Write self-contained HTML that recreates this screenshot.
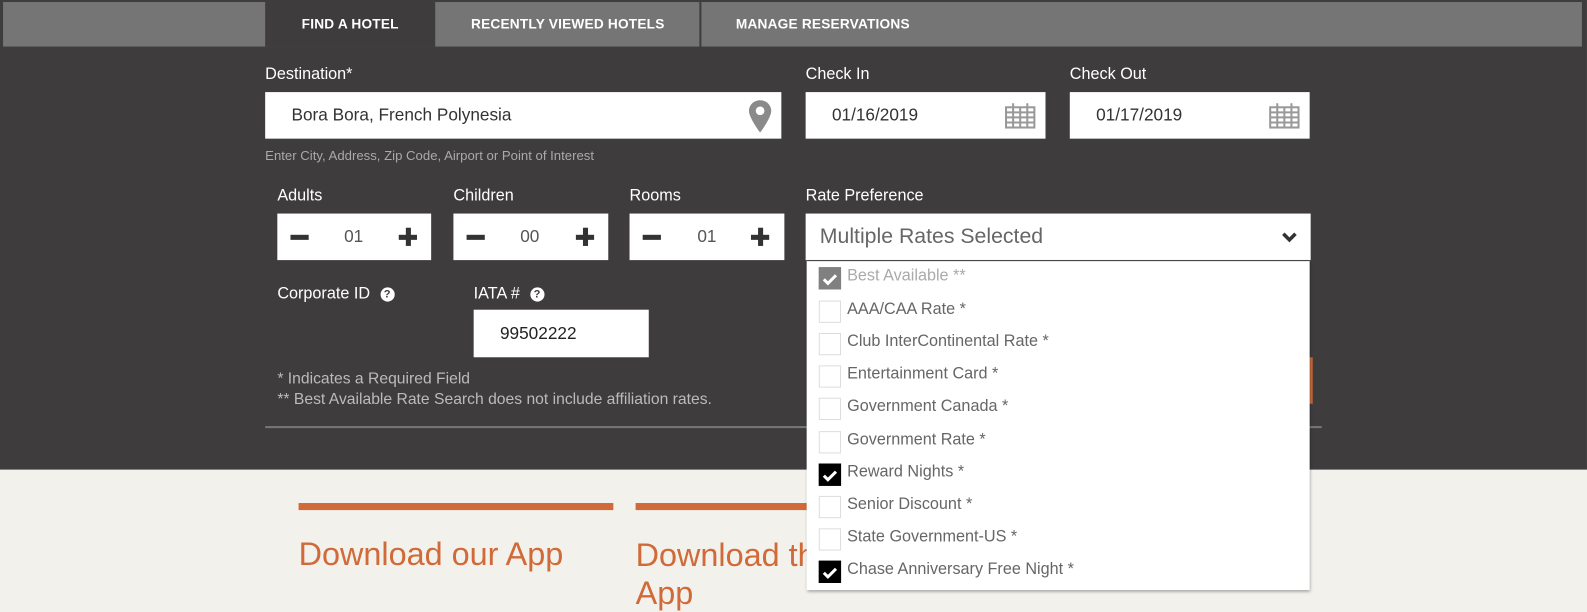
<!DOCTYPE html>
<html><head><meta charset="utf-8"><style>
*{margin:0;padding:0;box-sizing:border-box}
body{width:1587px;height:597px;overflow:hidden;background:#f2f1ec;font-family:"Liberation Sans",sans-serif;position:relative}
#w{position:absolute;left:0;top:0;width:1568px;height:590px;transform:scale(1.0121);transform-origin:0 0}
.a{position:absolute}
.dark{left:0;top:0;width:1568px;height:464px;background:#3e3c3d}
.tabbar{left:3px;top:2px;width:1560px;height:44px;background:#757575}
.tab{top:2px;height:44px;color:#fff;font-weight:bold;font-size:13.5px;line-height:44px;text-align:center;letter-spacing:.2px}
.lbl{color:#fff;font-size:16px}
.box{background:#fff}
.val{color:#333;font-size:17px}
.q{display:inline-block;width:14px;height:14px;border-radius:50%;background:#fff;color:#3e3c3d;font-size:11px;font-weight:bold;text-align:center;line-height:14px;vertical-align:1px;margin-left:10px}
.item{left:809px;height:32px;width:480px}
.cb{position:absolute;left:0;top:6px;width:22px;height:22px;border:1px solid #ddd;background:#fff}
.cb.on{background:#000;border-color:#000}
.cb.dis{background:#808080;border-color:#808080}
.it{position:absolute;left:28px;top:6px;font-size:16px;color:#666}
</style></head><body><div id="w">
<div class="a dark"></div>
<div class="a tabbar"></div>
<div class="a tab" style="left:262px;width:168px;background:#3e3c3d">FIND A HOTEL</div>
<div class="a tab" style="left:431px;width:260px">RECENTLY VIEWED HOTELS</div>
<div class="a" style="left:691px;top:2px;width:2px;height:44px;background:#3e3c3d"></div>
<div class="a tab" style="left:693px;width:240px">MANAGE RESERVATIONS</div>

<div class="a lbl" style="left:262px;top:65px">Destination*</div>
<div class="a box" style="left:262px;top:91px;width:510px;height:46px"></div>
<div class="a val" style="left:288px;top:104px">Bora Bora, French Polynesia</div>
<svg class="a" style="left:739px;top:98px" width="24" height="34" viewBox="0 0 24 34"><path d="M12 1C5.9 1 1 5.6 1 11.6c0 7 11 21.4 11 21.4s11-14.4 11-21.4C23 5.6 18.1 1 12 1z" fill="#8a8a8a"/><circle cx="12" cy="11.5" r="4.3" fill="#fff"/></svg>
<div class="a" style="left:262px;top:146px;color:#aaa;font-size:13px">Enter City, Address, Zip Code, Airport or Point of Interest</div>

<div class="a lbl" style="left:796px;top:65px">Check In</div>
<div class="a box" style="left:796px;top:91px;width:237px;height:46px"></div>
<div class="a val" style="left:822px;top:104px">01/16/2019</div>
<div class="a lbl" style="left:1057px;top:65px">Check Out</div>
<div class="a box" style="left:1057px;top:91px;width:237px;height:46px"></div>
<div class="a val" style="left:1083px;top:104px">01/17/2019</div>
<svg class="a" style="left:992px;top:100px" width="32" height="28" viewBox="0 0 32 28"><g fill="none" stroke="#999" stroke-width="2"><rect x="2" y="6" width="28" height="20"/><path d="M2 11h28M2 16h28M2 21h28M9 6v20M16 6v20M23 6v20M9 2v6M23 2v6"/></g></svg>
<svg class="a" style="left:1253px;top:100px" width="32" height="28" viewBox="0 0 32 28"><g fill="none" stroke="#999" stroke-width="2"><rect x="2" y="6" width="28" height="20"/><path d="M2 11h28M2 16h28M2 21h28M9 6v20M16 6v20M23 6v20M9 2v6M23 2v6"/></g></svg>

<div class="a lbl" style="left:274px;top:185px">Adults</div>
<div class="a lbl" style="left:448px;top:185px">Children</div>
<div class="a lbl" style="left:622px;top:185px">Rooms</div>
<div class="a box" style="left:274px;top:211px;width:152px;height:46px"></div>
<div class="a box" style="left:448px;top:211px;width:153px;height:46px"></div>
<div class="a box" style="left:622px;top:211px;width:153px;height:46px"></div>
<div class="a" style="left:287px;top:232px;width:18px;height:5px;background:#333"></div>
<div class="a" style="left:461px;top:232px;width:18px;height:5px;background:#333"></div>
<div class="a" style="left:635px;top:232px;width:18px;height:5px;background:#333"></div>
<div class="a" style="left:394px;top:232px;width:18px;height:5px;background:#333"></div><div class="a" style="left:400.5px;top:225px;width:5px;height:18px;background:#333"></div>
<div class="a" style="left:569px;top:232px;width:18px;height:5px;background:#333"></div><div class="a" style="left:575.5px;top:225px;width:5px;height:18px;background:#333"></div>
<div class="a" style="left:742px;top:232px;width:18px;height:5px;background:#333"></div><div class="a" style="left:748.5px;top:225px;width:5px;height:18px;background:#333"></div>
<div class="a val" style="left:340px;top:224px;color:#555">01</div>
<div class="a val" style="left:514px;top:224px;color:#555">00</div>
<div class="a val" style="left:689px;top:224px;color:#555">01</div>

<div class="a lbl" style="left:796px;top:185px">Rate Preference</div>
<div class="a box" style="left:796px;top:211px;width:499px;height:46px"></div>
<div class="a" style="left:810px;top:222px;font-size:21px;color:#666">Multiple Rates Selected</div>
<svg class="a" style="left:1266px;top:229px" width="16" height="12" viewBox="0 0 16 12"><path d="M2 2l6 6 6-6" fill="none" stroke="#333" stroke-width="3.5"/></svg>

<div class="a lbl" style="left:274px;top:282px">Corporate ID<span class="q">?</span></div>
<div class="a lbl" style="left:468px;top:282px">IATA #<span class="q">?</span></div>
<div class="a box" style="left:468px;top:306px;width:173px;height:47px"></div>
<div class="a" style="left:494px;top:320px;font-size:17px;color:#222">99502222</div>
<div class="a" style="left:274px;top:365px;font-size:15.5px;color:#bbb;line-height:20px">* Indicates a Required Field<br>** Best Available Rate Search does not include affiliation rates.</div>
<div class="a" style="left:1290px;top:353px;width:7px;height:46px;background:#c8683a"></div>
<div class="a" style="left:262px;top:421px;width:1044px;height:2px;background:#777"></div>

<div class="a" style="left:295px;top:497px;width:311px;height:7px;background:#d06a38"></div>
<div class="a" style="left:628px;top:497px;width:200px;height:7px;background:#d06a38"></div>
<div class="a" style="left:295px;top:529px;font-size:32px;color:#d06a38">Download our App</div>
<div class="a" style="left:628px;top:529px;font-size:32px;color:#d06a38;line-height:38px">Download the<br>App</div>

<div class="a" style="left:797px;top:257px;width:497px;height:326px;background:#fff;border-top:1px solid #333;box-shadow:1px 2px 3px rgba(0,0,0,.35)"></div>
<div class="a item" style="top:258px"><div class="cb dis"></div><div class="it" style="color:#aaa">Best Available **</div></div>
<div class="a item" style="top:291px"><div class="cb"></div><div class="it">AAA/CAA Rate *</div></div>
<div class="a item" style="top:323px"><div class="cb"></div><div class="it">Club InterContinental Rate *</div></div>
<div class="a item" style="top:355px"><div class="cb"></div><div class="it">Entertainment Card *</div></div>
<div class="a item" style="top:387px"><div class="cb"></div><div class="it">Government Canada *</div></div>
<div class="a item" style="top:420px"><div class="cb"></div><div class="it">Government Rate *</div></div>
<div class="a item" style="top:452px"><div class="cb on"></div><div class="it">Reward Nights *</div></div>
<div class="a item" style="top:484px"><div class="cb"></div><div class="it">Senior Discount *</div></div>
<div class="a item" style="top:516px"><div class="cb"></div><div class="it">State Government-US *</div></div>
<div class="a item" style="top:548px"><div class="cb on"></div><div class="it">Chase Anniversary Free Night *</div></div>
<svg class="a" style="left:812px;top:269px" width="16" height="14" viewBox="0 0 16 14"><path d="M2 7l4 4 8-8" fill="none" stroke="#fff" stroke-width="3"/></svg>
<svg class="a" style="left:812px;top:463px" width="16" height="14" viewBox="0 0 16 14"><path d="M2 7l4 4 8-8" fill="none" stroke="#fff" stroke-width="3"/></svg>
<svg class="a" style="left:812px;top:559px" width="16" height="14" viewBox="0 0 16 14"><path d="M2 7l4 4 8-8" fill="none" stroke="#fff" stroke-width="3"/></svg>
</div></body></html>
